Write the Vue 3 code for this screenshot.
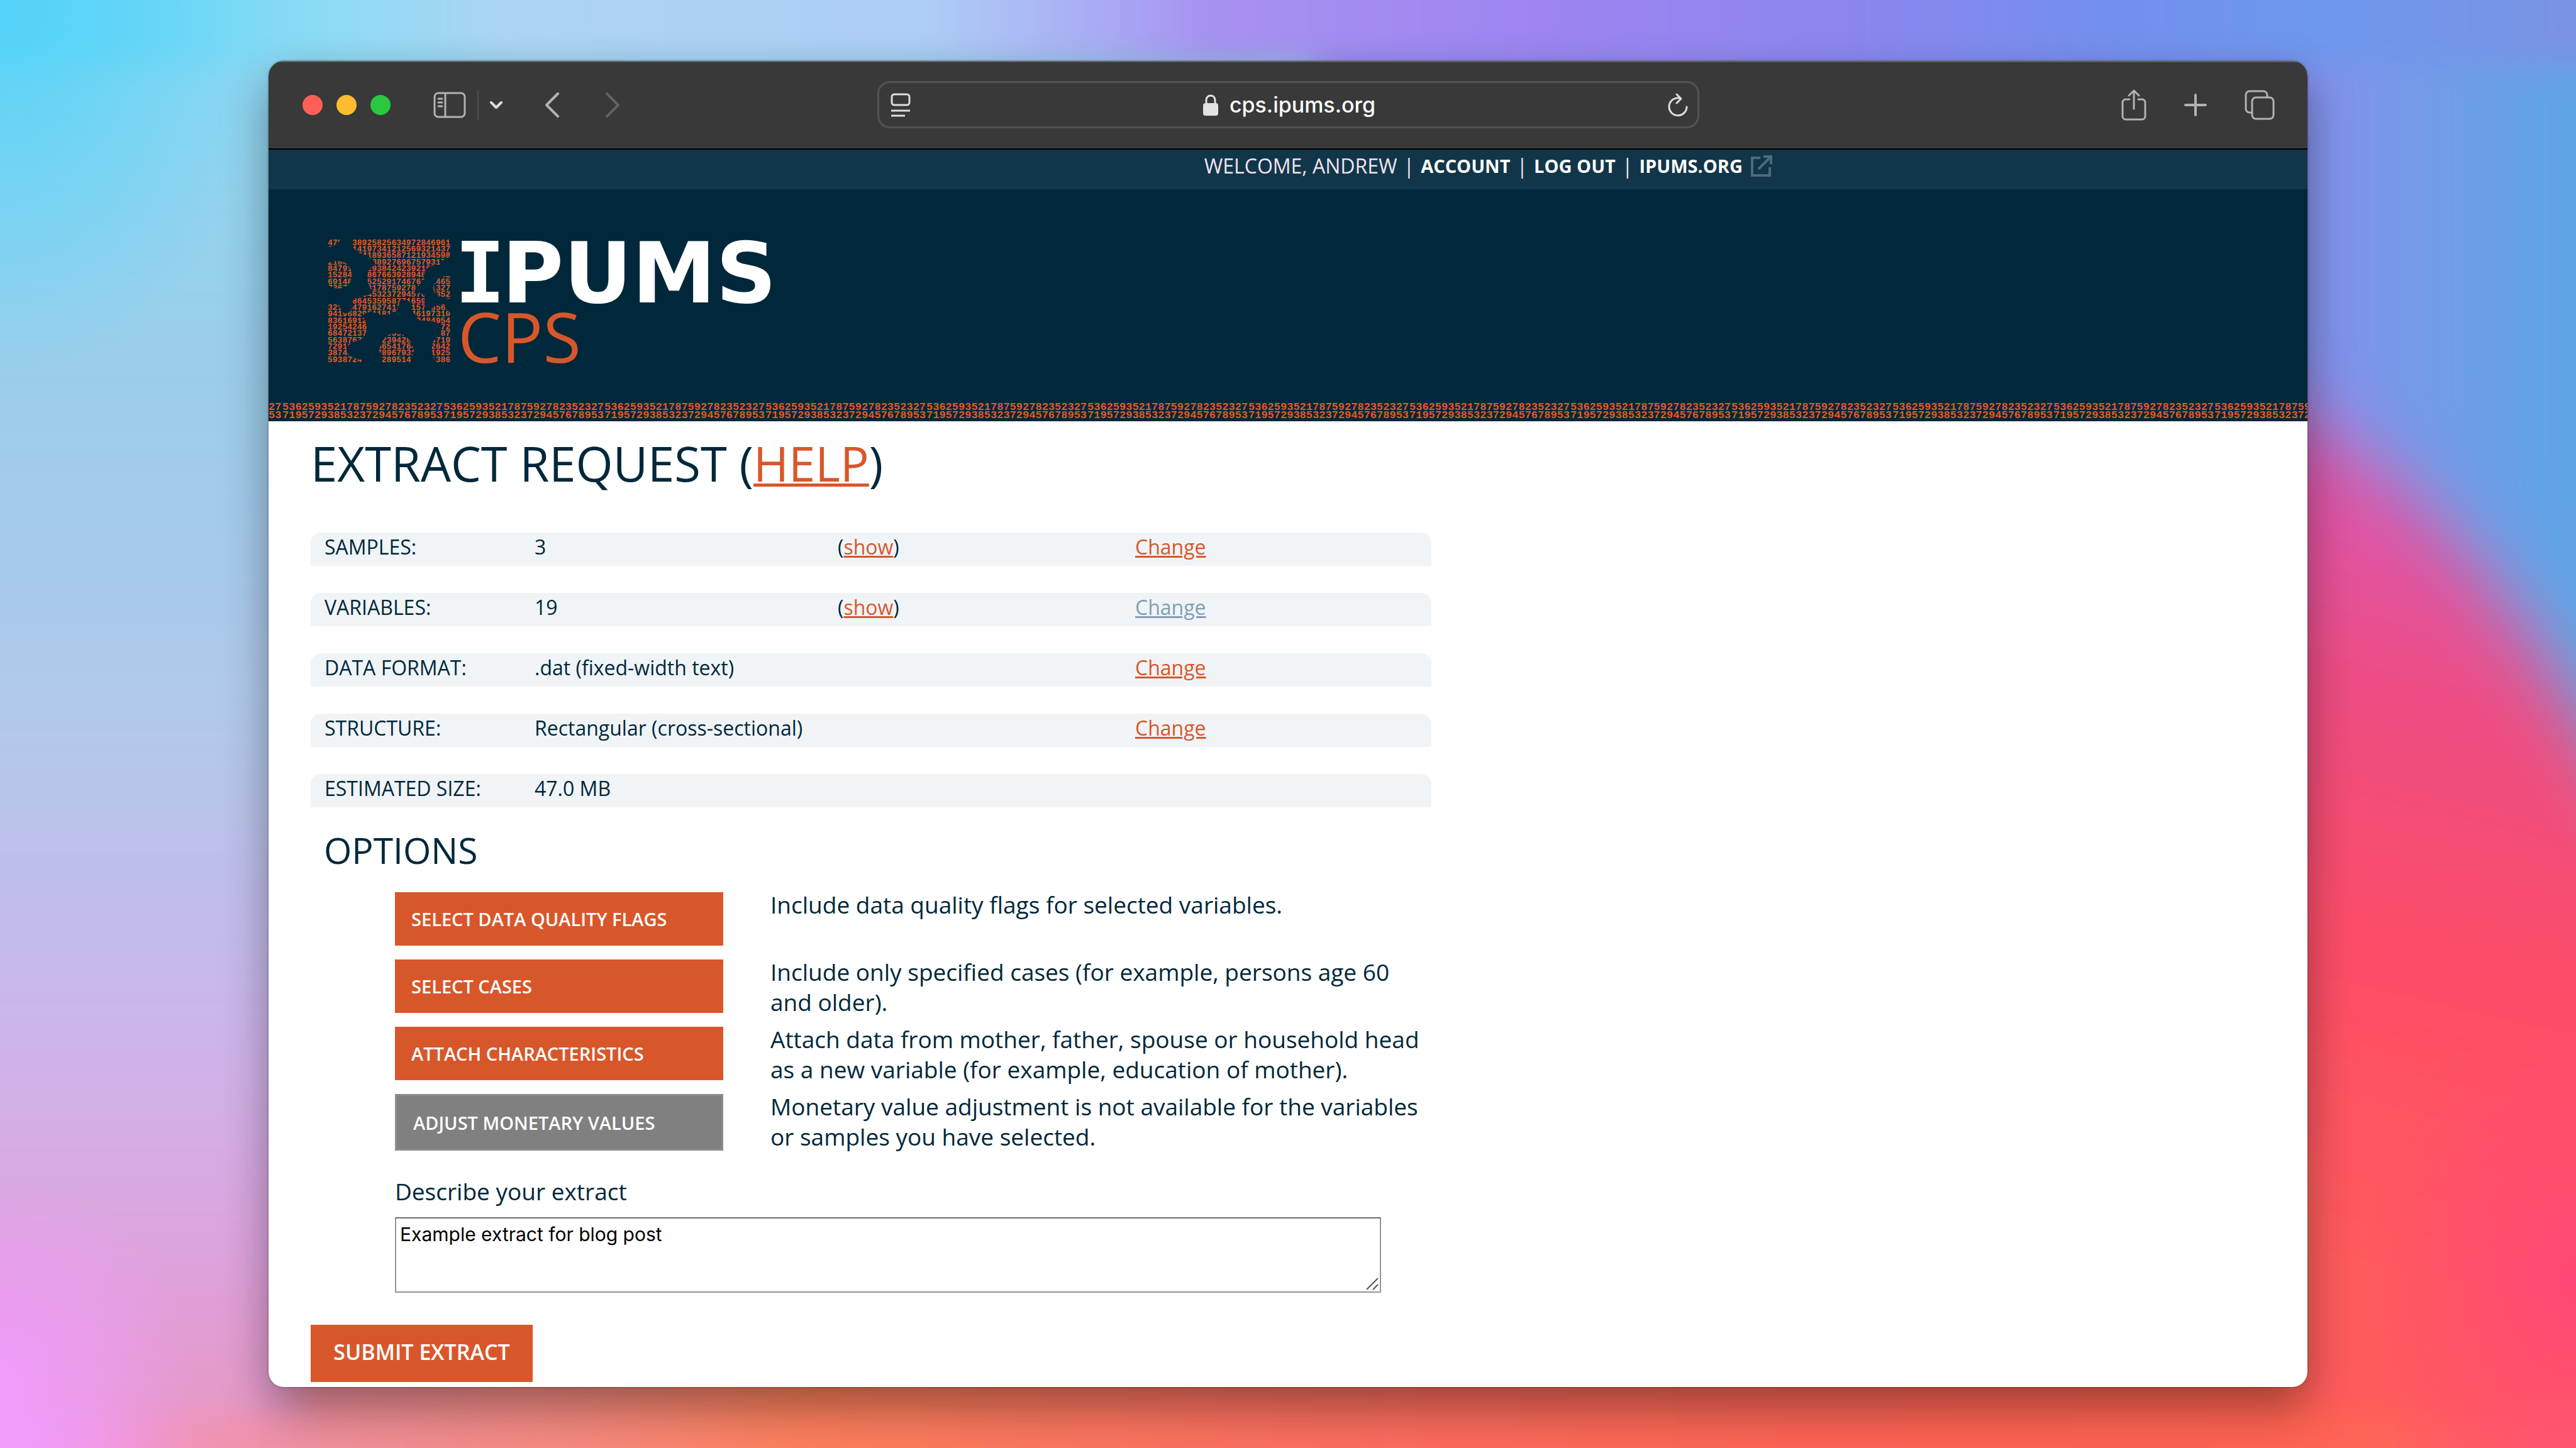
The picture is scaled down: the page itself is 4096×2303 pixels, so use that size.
<script setup>
import { ref } from 'vue'

const description = ref('Example extract for blog post')

const summary = [
  { label: 'SAMPLES:', value: '3', show: true, change: 'active' },
  { label: 'VARIABLES:', value: '19', show: true, change: 'muted' },
  { label: 'DATA FORMAT:', value: '.dat (fixed-width text)', show: false, change: 'active' },
  { label: 'STRUCTURE:', value: 'Rectangular (cross-sectional)', show: false, change: 'active' },
  { label: 'ESTIMATED SIZE:', value: '47.0 MB', show: false, change: '' },
]

const options = [
  { label: 'SELECT DATA QUALITY FLAGS', text: 'Include data quality flags for selected variables.', disabled: false },
  { label: 'SELECT CASES', text: 'Include only specified cases (for example, persons age 60 and older).', disabled: false },
  { label: 'ATTACH CHARACTERISTICS', text: 'Attach data from mother, father, spouse or household head as a new variable (for example, education of mother).', disabled: false },
  { label: 'ADJUST MONETARY VALUES', text: 'Monetary value adjustment is not available for the variables or samples you have selected.', disabled: true },
]

const strip = [
  { lead: '27', tile: '5362593521787592782352327' },
  { lead: '53', tile: '7195729385323729457678953' },
]

const logoDigits = [
  '4795238925825634972846961',
  '6213514197341212569321437',
  '1853267418936587121934598',
  '2104976583892769675793174',
  '8479163529384242392165873',
  '1528497386766392894871542',
  '6914837252529174676281465',
  '7367451281787592784631327',
  '2859137645323729457683352',
  '4716286453595877165942837',
  '3218547916274135215798561',
  '9419682951181742546197310',
  '8361691274853692579484954',
  '1925424618375926481593172',
  '6847213759129353648215387',
  '5638767241323942876514719',
  '7291853642565417643852642',
  '3874512963789679315471925',
  '5938724461528951487321386',
]
</script>

<template>
  <div class="desktop">
    <svg class="wallpaper" viewBox="0 0 1568 882" preserveAspectRatio="none" aria-hidden="true">
      <defs>
        <linearGradient id="wpLeft" x1="0" y1="0" x2="0" y2="1">
          <stop offset="0" stop-color="#8adcf5" />
          <stop offset=".3" stop-color="#9ccdea" />
          <stop offset=".5" stop-color="#b2c9eb" />
          <stop offset=".68" stop-color="#ccb6ea" />
          <stop offset=".82" stop-color="#dda3dd" />
          <stop offset="1" stop-color="#ec90b4" />
        </linearGradient>
        <linearGradient id="wpTop" gradientUnits="userSpaceOnUse" x1="0" y1="0" x2="1568" y2="0">
          <stop offset="0" stop-color="#5bd6f8" />
          <stop offset=".13" stop-color="#8edbf4" />
          <stop offset=".2" stop-color="#acd4f3" />
          <stop offset=".36" stop-color="#aecdf5" />
          <stop offset=".42" stop-color="#a9aff4" />
          <stop offset=".47" stop-color="#a791f1" />
          <stop offset=".6" stop-color="#9e85f2" />
          <stop offset=".72" stop-color="#8b86ee" />
          <stop offset=".82" stop-color="#7290ee" />
          <stop offset=".9" stop-color="#6c98ec" />
          <stop offset="1" stop-color="#7a92e4" />
        </linearGradient>
        <linearGradient id="wpBottom" gradientUnits="userSpaceOnUse" x1="0" y1="0" x2="1568" y2="0">
          <stop offset="0" stop-color="#f09af5" />
          <stop offset=".06" stop-color="#f095c0" />
          <stop offset=".13" stop-color="#f08f9a" />
          <stop offset=".22" stop-color="#f68a80" />
          <stop offset=".31" stop-color="#fd7f5c" />
          <stop offset=".5" stop-color="#fa6e60" />
          <stop offset=".7" stop-color="#fc6454" />
          <stop offset=".9" stop-color="#ff6452" />
          <stop offset="1" stop-color="#ff5f6c" />
        </linearGradient>
        <linearGradient id="wpBlue" gradientUnits="userSpaceOnUse" x1="1404" y1="0" x2="1568" y2="0">
          <stop offset="0" stop-color="#8590ec" />
          <stop offset=".4" stop-color="#759bea" />
          <stop offset="1" stop-color="#5fa5e6" />
        </linearGradient>
        <linearGradient id="wpPink" gradientUnits="userSpaceOnUse" x1="1510" y1="330" x2="1410" y2="760">
          <stop offset="0" stop-color="#de54a6" />
          <stop offset=".25" stop-color="#ee4d80" />
          <stop offset=".6" stop-color="#fd4d66" />
          <stop offset="1" stop-color="#ff5b5c" />
        </linearGradient>
        <radialGradient id="wpCyan">
          <stop offset="0" stop-color="#56d3f8" />
          <stop offset="1" stop-color="#56d3f8" stop-opacity="0" />
        </radialGradient>
        <radialGradient id="wpMagenta">
          <stop offset="0" stop-color="#f09cff" />
          <stop offset="1" stop-color="#f09cff" stop-opacity="0" />
        </radialGradient>
        <radialGradient id="wpRose">
          <stop offset="0" stop-color="#ff4876" />
          <stop offset="1" stop-color="#ff4876" stop-opacity="0" />
        </radialGradient>
        <filter id="wpSoft" filterUnits="userSpaceOnUse" x="-100" y="-100" width="1768" height="1082">
          <feGaussianBlur stdDeviation="9" />
        </filter>
        <filter id="wpSofter" filterUnits="userSpaceOnUse" x="1200" y="100" width="600" height="1000">
          <feGaussianBlur stdDeviation="20" />
        </filter>
      </defs>
      <g filter="url(#wpSoft)">
        <rect x="-60" y="-60" width="900" height="1002" fill="url(#wpLeft)" />
        <rect x="800" y="-60" width="840" height="1002" fill="url(#wpBlue)" />
        <path d="M1300 240C1340 230 1400 246 1440 280C1500 324 1550 390 1640 560V980H1300Z" fill="url(#wpPink)" filter="url(#wpSofter)" />
        <rect x="-60" y="-60" width="1700" height="100" fill="url(#wpTop)" />
        <rect x="184" y="700" width="1220" height="246" fill="url(#wpBottom)" />
        <rect x="-60" y="862" width="1700" height="90" fill="url(#wpBottom)" />
      </g>
      <ellipse cx="0" cy="0" rx="170" ry="230" fill="url(#wpCyan)" />
      <ellipse cx="0" cy="846" rx="120" ry="130" fill="url(#wpMagenta)" />
      <ellipse cx="1568" cy="780" rx="130" ry="170" fill="url(#wpRose)" />
    </svg>

    <div class="window">
      <div class="toolbar">
        <div class="tools">
          <div class="lights">
            <button class="light red" aria-label="Close"></button>
            <button class="light yellow" aria-label="Minimise"></button>
            <button class="light green" aria-label="Zoom"></button>
          </div>
          <button class="tool sidebar" aria-label="Show sidebar">
            <svg width="52" height="42" viewBox="0 0 52 42" fill="none" stroke="#b1b2b1" stroke-width="3">
              <rect x="2" y="2" width="48" height="38" rx="6" />
              <path d="M19 2V40" />
              <path d="M8 11H14M8 17H14M8 23H14" stroke-linecap="round" />
            </svg>
          </button>
          <span class="divider"></span>
          <button class="tool menu" aria-label="Sidebar options">
            <svg width="20" height="14" viewBox="0 0 20 14" fill="none" stroke="#dedede" stroke-width="4" stroke-linecap="round" stroke-linejoin="round">
              <path d="M2 3L10 11L18 3" />
            </svg>
          </button>
          <button class="tool back" aria-label="Back">
            <svg width="22" height="40" viewBox="0 0 22 40" fill="none" stroke="#b1b2b1" stroke-width="4" stroke-linecap="round" stroke-linejoin="round">
              <path d="M20 2L2 20L20 38" />
            </svg>
          </button>
          <button class="tool forward" aria-label="Forward">
            <svg width="22" height="40" viewBox="0 0 22 40" fill="none" stroke="#616261" stroke-width="4" stroke-linecap="round" stroke-linejoin="round">
              <path d="M2 2L20 20L2 38" />
            </svg>
          </button>
        </div>

        <div class="address">
          <svg width="32" height="38" viewBox="0 0 32 38" fill="none" stroke="#dedede" stroke-width="3">
            <rect x="2" y="2" width="28" height="17" rx="4" />
            <path d="M1 28H31M1 36H23" />
          </svg>
          <span class="site">
            <svg width="24" height="34" viewBox="0 0 24 34">
              <path d="M5 15V9a7 7 0 0 1 14 0v6" fill="none" stroke="#e2e2e2" stroke-width="3" />
              <rect x="0" y="14" width="24" height="20" rx="4" fill="#e2e2e2" />
            </svg>
            <span>cps.ipums.org</span>
          </span>
          <button class="tool" aria-label="Reload">
            <svg width="32" height="38" viewBox="0 0 32 38" fill="none" stroke="#dedede" stroke-width="3" stroke-linecap="round" stroke-linejoin="round">
              <path d="M19 8A14 14 0 1 0 30 22" />
              <path d="M14 2L21 9L14 16" />
            </svg>
          </button>
        </div>

        <div class="tools right">
          <button class="tool" aria-label="Share">
            <svg width="40" height="50" viewBox="0 0 40 50" fill="none" stroke="#b1b2b1" stroke-width="3" stroke-linecap="round" stroke-linejoin="round">
              <path d="M13 16H7a5 5 0 0 0-5 5V43a5 5 0 0 0 5 5H33a5 5 0 0 0 5-5V21a5 5 0 0 0-5-5H27" />
              <path d="M20 31V2M12 10L20 2L28 10" />
            </svg>
          </button>
          <button class="tool" aria-label="New tab">
            <svg width="36" height="36" viewBox="0 0 36 36" fill="none" stroke="#b1b2b1" stroke-width="4" stroke-linecap="round">
              <path d="M18 2V34M2 18H34" />
            </svg>
          </button>
          <button class="tool" aria-label="Show all tabs">
            <svg width="48" height="48" viewBox="0 0 48 48" fill="none" stroke="#b1b2b1" stroke-width="3">
              <path d="M12 36H8a6 6 0 0 1-6-6V8a6 6 0 0 1 6-6H30a6 6 0 0 1 6 6V12" />
              <rect x="12" y="12" width="34" height="34" rx="6" />
            </svg>
          </button>
        </div>
      </div>

      <nav class="account">
        <span>WELCOME, ANDREW</span>
        <span>|</span>
        <a href="#account">ACCOUNT</a>
        <span>|</span>
        <a href="#logout">LOG OUT</a>
        <span>|</span>
        <a href="#ipums" class="external">
          IPUMS.ORG
          <svg width="36" height="36" viewBox="0 0 36 36" fill="none" stroke="#4d6b7b" stroke-width="4">
            <path d="M16 5H3V33H31V20" />
            <path d="M13 23L33 3M21 3H33V15" />
          </svg>
        </a>
      </nav>

      <header class="banner">
        <a href="#home" class="logo" aria-label="IPUMS CPS">
          <svg width="706" height="204" viewBox="0 0 706 204">
            <defs>
              <clipPath id="mosaic">
                <path d="M0 0H20Q16 12 0 13Z" />
                <path d="M0 39Q6 35 17 35Q38 38 38 57Q38 78 17 79Q6 79 0 72Z" />
                <path d="M195 59V95Q190 95 182 93Q168 90 168 77Q170 62 184 59Z" />
                <path d="M82 178Q86 150 109 150Q132 152 137 178L132 197H87Z" />
                <path d="M39 0H195V26Q194 30 184 33Q183 42 170 42Q153 44 153 60Q155 64 152 66Q146 74 139 80V86Q148 84 154 90V114H163Q168 104 187 104V110L195 118V197H172Q166 188 166 172Q166 160 180 152L178 135Q170 130 150 130Q142 130 142 124L134 114V104Q128 96 115 98L113 108Q108 124 80 120L72 116Q60 116 55 122Q62 130 62 142Q62 152 55 160Q30 165 30 176Q30 188 54 192V197H0V103H18Q20 115 28 119Q36 119 39 108V100Q42 94 52 91Q68 90 72 84Q63 74 63 60Q63 46 76 42Q74 30 58 25Q42 20 39 10Z" />
              </clipPath>
            </defs>
            <g transform="translate(1 1)">
              <g class="mosaic" clip-path="url(#mosaic)">
                <text v-for="(row, i) in logoDigits" :key="i" x="0" :y="9.5 + i * 10.35">{{ row }}</text>
              </g>
            </g>
            <text class="word" y="102"><tspan class="slab" x="203">I</tspan><tspan x="278">PUMS</tspan></text>
            <text class="product" x="208" y="198">CPS</text>
          </svg>
        </a>
        <div class="strip" aria-hidden="true">
          <div v-for="row in strip" :key="row.lead" class="strip-row">
            <span class="lead">{{ row.lead }}</span>
            <span v-for="n in 13" :key="n" class="tile">{{ row.tile }}</span>
          </div>
        </div>
      </header>

      <main class="content">
        <h1>EXTRACT REQUEST (<a href="#help">HELP</a>)</h1>

        <table class="summary">
          <tbody>
            <tr v-for="row in summary" :key="row.label">
              <th scope="row">{{ row.label }}</th>
              <td class="value">{{ row.value }}</td>
              <td class="show"><template v-if="row.show">(<a href="#show">show</a>)</template></td>
              <td class="change"><a v-if="row.change" href="#change" :class="row.change">Change</a></td>
            </tr>
          </tbody>
        </table>

        <h2>OPTIONS</h2>

        <div class="options">
          <template v-for="option in options" :key="option.label">
            <button class="option" :disabled="option.disabled">{{ option.label }}</button>
            <p>{{ option.text }}</p>
          </template>
        </div>

        <div class="describe">
          <label for="description">Describe your extract</label>
          <div class="field">
            <textarea id="description" v-model="description"></textarea>
            <svg class="grip" width="20" height="20" viewBox="0 0 20 20" stroke="#555" stroke-width="2" aria-hidden="true">
              <path d="M1 19L19 1M11 19L19 11" />
            </svg>
          </div>
        </div>

        <button class="submit">SUBMIT EXTRACT</button>
      </main>
    </div>
  </div>
</template>

<style>
body {
  background: #9e85f2;
}
</style>

<style scoped>
.desktop {
  position: relative;
  box-sizing: border-box;
  min-height: 100vh;
  padding: 97px 427px;
  color: #00283a;
  font-family: 'Open Sans', 'Noto Sans', sans-serif;
}

.wallpaper {
  position: absolute;
  inset: 0;
  width: 100%;
  height: 100%;
}

.window {
  position: relative;
  overflow: clip;
  border-radius: 24px;
  background: #fff;
  box-shadow: 0 0 3px rgba(0, 0, 0, 0.5), 0 32px 72px rgba(0, 0, 0, 0.38);
}

button {
  margin: 0;
  border: 0;
  font-family: inherit;
}

.toolbar {
  display: grid;
  grid-template-columns: 1fr minmax(0, 1307px) 1fr;
  align-items: center;
  height: 139px;
  border-bottom: 2px solid #000;
  background: #383938;
  box-shadow: inset 0 2px #5f605f;
}

.tools {
  display: flex;
  align-items: center;
  padding: 0 52px 0 54px;
}

.tools.right {
  justify-content: flex-end;
  gap: 60px;
}

.lights {
  display: flex;
  gap: 22px;
}

.light {
  width: 32px;
  height: 32px;
  padding: 0;
  border-radius: 50%;
}

.red {
  background: #ff5f57;
}

.yellow {
  background: #febc2e;
}

.green {
  background: #28c840;
}

.tool {
  display: flex;
  padding: 0;
  background: none;
}

.sidebar {
  margin-left: 68px;
}

.divider {
  width: 2px;
  height: 48px;
  margin-left: 18px;
  background: #4c4d4c;
}

.menu {
  margin-left: 18px;
}

.back {
  margin-left: 68px;
}

.forward {
  margin-left: 74px;
}

.address {
  display: flex;
  align-items: center;
  justify-content: space-between;
  box-sizing: border-box;
  height: 75px;
  padding: 0 14px 0 18px;
  border: 3px solid #525352;
  border-radius: 20px;
}

.site {
  display: flex;
  align-items: center;
  gap: 18px;
  color: #fff;
  font: 500 34px/44px Inter, sans-serif;
}

.account {
  display: flex;
  justify-content: flex-end;
  gap: 10px;
  padding: 0 850px 11px 0;
  background: #123649;
  color: #f0e4f2;
  font-size: 32px;
  line-height: 52px;
}

.account a {
  color: #fff;
  font-size: 29px;
  font-weight: 700;
  text-decoration: none;
}

.external {
  display: flex;
  align-items: center;
  gap: 12px;
}

.banner {
  overflow: hidden;
  background: #00283a;
}

.logo {
  display: block;
  padding: 78px 93px 58px;
}

.logo svg {
  display: block;
  overflow: visible;
}

.mosaic {
  fill: #e2592a;
  font: 700 13px 'Liberation Mono', monospace;
}

.word {
  fill: #fff;
  font: 700 134px 'DejaVu Sans', sans-serif;
}

.slab {
  font-family: 'DejaVu Sans Mono', monospace;
}

.product {
  fill: #d8572a;
  font: 400 110px 'Open Sans', sans-serif;
}

.strip {
  padding-bottom: 3px;
  color: #e2592a;
  font: 700 17px/13px 'Liberation Mono', monospace;
}

.strip-row {
  display: flex;
}

.lead {
  flex: 0 0 22px;
}

.tile {
  flex: 0 0 256px;
}

.content {
  padding: 0 67px 8px;
}

.content a {
  color: #d8572a;
  text-decoration-thickness: 3px;
}

h1,
h2,
p {
  margin: 0;
  font-weight: 400;
}

h1 {
  font-size: 76px;
  line-height: 134px;
}

.content h1 a {
  text-decoration-thickness: 5px;
}

.summary {
  width: 1782px;
  max-width: 100%;
  border-spacing: 0 43px;
  table-layout: fixed;
  font-size: 32px;
  line-height: 45px;
}

.summary th,
.summary td {
  padding: 0 0 8px;
  background: #f0f4f7;
  text-align: left;
  font-weight: 400;
}

.summary th {
  width: 334px;
  padding-left: 22px;
  border-top-left-radius: 16px;
}

.value {
  width: 482px;
}

.show {
  width: 473px;
}

.summary .change {
  border-top-right-radius: 16px;
}

.content .muted {
  color: #7f9fb4;
}

h2 {
  margin-bottom: 38px;
  padding-left: 21px;
  font-size: 57px;
  line-height: 50px;
}

.options {
  display: grid;
  grid-template-columns: 522px minmax(0, 1046px);
  grid-auto-rows: minmax(96px, auto);
  gap: 11px 75px;
  padding-left: 134px;
  font-size: 37px;
  line-height: 48px;
}

.option {
  align-self: start;
  height: 85px;
  margin-top: 4px;
  padding: 0 26px;
  background: #d8572a;
  color: #fff;
  font-size: 29px;
  font-weight: 600;
  text-align: left;
}

.option:disabled {
  height: 90px;
  border: 3px solid #8c8c8c;
  background: #808080;
}

.describe {
  margin-top: 39px;
  padding-left: 134px;
  font-size: 37px;
  line-height: 48px;
}

.describe label {
  display: block;
}

.field {
  position: relative;
  width: 1568px;
  max-width: 100%;
  margin-top: 17px;
}

textarea {
  display: block;
  box-sizing: border-box;
  width: 100%;
  height: 120px;
  padding: 8px 6px;
  border: 2px solid #959595;
  border-top-color: #6e6e6e;
  background: #fff;
  color: #000;
  font: 400 30px/35px Inter, sans-serif;
  resize: none;
}

.grip {
  position: absolute;
  right: 4px;
  bottom: 4px;
}

.submit {
  display: block;
  width: 353px;
  height: 91px;
  margin-top: 51px;
  padding: 0 0 6px;
  background: #d8572a;
  color: #fff;
  font-size: 34px;
  font-weight: 600;
}
</style>
